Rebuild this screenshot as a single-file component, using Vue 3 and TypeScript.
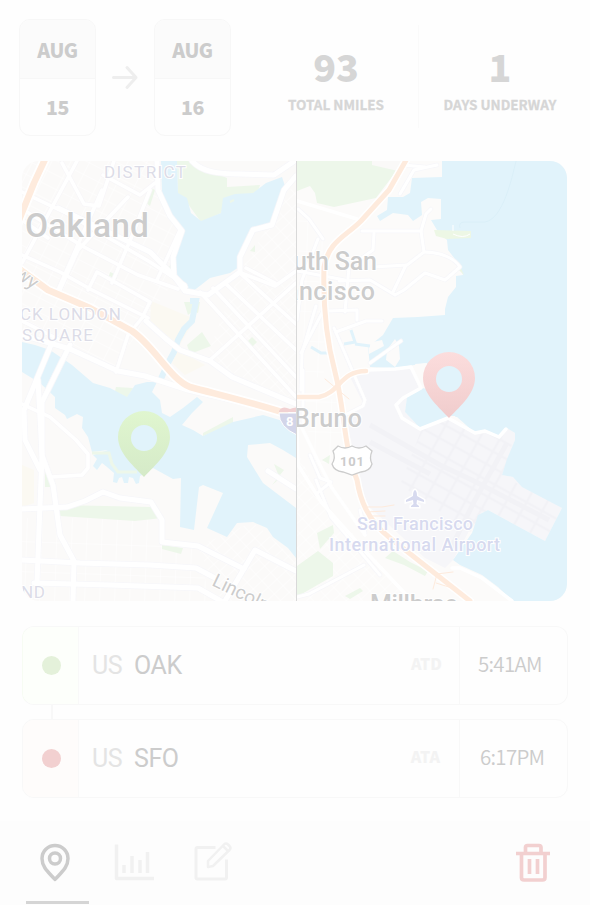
<script setup lang="ts">
interface TripDate { month: string; day: number }
interface Stat { value: number; label: string }
interface Stop { country: string; code: string; tag: string; time: string; kind: 'depart' | 'arrive' }

const dates: TripDate[] = [{ month: 'AUG', day: 15 }, { month: 'AUG', day: 16 }]
const stats: Stat[] = [{ value: 93, label: 'TOTAL NMILES' }, { value: 1, label: 'DAYS UNDERWAY' }]
const stops: Stop[] = [
  { country: 'US', code: 'OAK', tag: 'ATD', time: '5:41AM', kind: 'depart' },
  { country: 'US', code: 'SFO', tag: 'ATA', time: '6:17PM', kind: 'arrive' },
]

const pin = 'M0 0C-8-9-26-23-26-40a26 26 0 1 1 52 0C26-23 8-9 0 0ZM0-52a13 13 0 1 0 0 26a13 13 0 0 0 0-26Z'

const oaklandRoads: string[] = [
  'M22 192L66 213L150 262L185 285', 'M22 209L84 247L138 275L178 289', 'M22 255L60 272L92 290L148 318',
  'M77 161L22 263', 'M102 190L58 290', 'M128 197L78 250L60 290', 'M180 230L157 280', 'M150 190L132 236L112 283',
  'M62 163L84 204L99 206L114 161', 'M22 220L48 238', 'M103 175L140 195L155 183',
  'M88 290L97 272L150 302L142 318', 'M142 318L128 335L116 372', 'M22 321L60 340',
  'M210 360L296 283', 'M200 292L296 397', 'M213 288L296 377', 'M225 283L296 350', 'M241 274L296 324',
  'M241 273L275 286L296 271', 'M246 268L275 283', 'M22 404L50 417L76 440L88 454L88 468L82 475L52 477',
]
const oaklandMajor: string[] = [
  'M192 161C202 172 218 174 240 174L274 175L296 160', 'M157 161L158 190L170 216L182 231L173 257L174 276L185 291L208 295L240 272L240 257L253 230L272 225L284 190L296 176',
  'M58 208L150 252L185 287', 'M146 321L165 338L180 350L210 361L232 377L296 404',
  'M22 335L70 349L118 371L145 376L188 390L275 410', 'M53 340L24 410L25 440L40 470', 'M70 345L42 402L42 455L53 485L60 535L74 561L73 601',
  'M38 380L42 455L39 530L37 583', 'M22 509L67 507L85 501L103 492L120 498L151 502L162 520L162 542L198 546L244 569',
  'M22 560L80 563L150 565L196 568L215 578', 'M34 583L110 585L198 588L221 601', 'M225 601L255 550L296 571', 'M268 471L296 489',
]
const bayRoads: string[] = [
  'M362 231L421 231L426 214L431 209', 'M421 231L424 252L407 265L373 267', 'M424 252C442 252 455 259 460 267L445 280L425 273L404 290L395 295L370 280L339 281',
  'M406 265L393 292', 'M400 194L414 170L437 165', 'M403 165L425 167', 'M323 239L309 219L298 209', 'M374 233L373 250L349 267L345 312',
  'M328 311L357 310L357 320', 'M336 332L366 321L382 321', 'M334 328L365 400L363 406L345 415', 'M297 271L345 280', 'M318 239L302 280L297 320',
  'M301 390L302 353L316 306', 'M303 370L303 424', 'M301 353L323 311', 'M316 480L331 517L380 575', 'M297 597L309 594L364 565',
  'M310 455L320 478L331 482L316 494', 'M401 341L370 363', 'M360 510L365 533',
]
const bayMajor: string[] = [
  'M297 201L357 219', 'M297 420L298 465L322 503L365 551L412 601', 'M300 424L320 465L332 488L365 535', 'M367 370L395 369L411 367L421 388L403 398L396 405L402 418L420 429L448 418L475 433L485 431L499 437L506 429',
  'M452 568L460 568L482 578L512 601',
]
const freeway = 'M409 155L389 190L361 221C345 237 329 241 324 267C323 300 325 335 335 372C345 410 343 445 357 480C360 499 367 520 390 538L470 601'
</script>

<template>
  <main class="trip">
    <header class="summary">
      <div class="dates">
        <template v-for="(d, i) in dates" :key="d.day">
          <svg v-if="i > 0" class="arrow" viewBox="0 0 28 26" width="28" height="26">
            <path d="M2.500 12.500H25M16 2.500l9 10L16 22.500" />
          </svg>
          <div class="date">
            <span class="month">{{ d.month }}</span>
            <span class="day">{{ d.day }}</span>
          </div>
        </template>
      </div>
      <div class="stats">
        <div v-for="s in stats" :key="s.label" class="stat">
          <strong>{{ s.value }}</strong>
          <span>{{ s.label }}</span>
        </div>
      </div>
    </header>

    <section class="map">
      <svg viewBox="22 161 545 440" width="545" height="440">
        <defs>
          <clipPath id="left"><rect x="22" y="161" width="274" height="440" /></clipPath>
          <clipPath id="right"><rect x="297" y="161" width="270" height="440" /></clipPath>
          <pattern id="gridA" width="17" height="13" patternUnits="userSpaceOnUse" patternTransform="rotate(27)"><path d="M0 0H17M0 0V13" stroke="#fff" /></pattern>
          <pattern id="gridB" width="15" height="30" patternUnits="userSpaceOnUse" patternTransform="rotate(2)"><path d="M0 0H15M0 0V30" stroke="#fff" /></pattern>
          <pattern id="gridC" width="9" height="12" patternUnits="userSpaceOnUse" patternTransform="rotate(47)"><path d="M0 0H9M0 0V12" stroke="#fff" /></pattern>
          <pattern id="runway" width="18" height="14" patternUnits="userSpaceOnUse" patternTransform="rotate(29)"><path d="M0 2H18M2 0V14" stroke="#f2f2f6" stroke-width="2.500" /></pattern>
          <linearGradient id="green" x1="0" y1="0" x2="0" y2="1"><stop offset="0" stop-color="#e0f6cf" /><stop offset="1" stop-color="#d5eac8" /></linearGradient>
          <linearGradient id="red" x1="0" y1="0" x2="0" y2="1"><stop offset="0" stop-color="#fcdddd" /><stop offset="1" stop-color="#f0cccc" /></linearGradient>
        </defs>

        <g clip-path="url(#left)">
          <rect x="22" y="161" width="275" height="440" fill="#fbfaf9" />
          <path d="M22 161H160V190L183 230L175 280L146 321L112 370L22 330Z" fill="url(#gridA)" />
          <path d="M60 518L162 520V542L198 546L210 601H22V518Z" fill="url(#gridB)" />
          <path d="M240 272L296 180V400L205 360ZM198 546L253 522L296 560V601H220Z" fill="url(#gridC)" />
          <path d="M151 301L195 319L176 351L150 326ZM178 350L205 365L185 375L172 363ZM22 465L34 470V503L22 507Z" fill="#fbf9f2" />
          <path d="M177 161H195L207 170L227 178V187L260 185L257 194L229 197L221 213L201 222L188 204L178 195ZM151 188L155 190L150 206L144 201ZM175 258V280L167 270ZM60 505L151 507L162 518L135 521L60 516ZM162 545L183 548L181 554L162 549ZM203 433L233 417V424L203 436ZM116 387L133 388L127 398L114 395ZM187 345L202 332L211 346L190 354ZM45 469L52 487H45ZM247 342L252 337L257 342L252 347ZM184 302H200L198 313L193 311L188 315ZM110 272L117 275V279L109 276ZM250 251L255 245V252ZM272 485L278 480V474L274 464L284 470Z" fill="#edf7ea" />
          <path d="M161 161H177L178 193L187 198L191 213L201 221L221 213L223 198L235 194L253 193L266 183L282 177L285 186L272 225L252 230L239 253V267L230 273L210 278L192 292L180 287L176 277V250L183 230L172 217L162 192Z" fill="#e1f3fb" />
          <path d="M190 301H196L192 321L184 329L178 340L174 352L168 363L160 381" fill="none" stroke="#e1f3fb" stroke-width="6" />
          <path d="M22 342L35 345L50 350L72 365L93 383L110 388L127 397L135 385L147 382H157L152 392L160 400L162 413L170 417L183 408L197 397L203 402L192 413L182 425L193 430L203 436L233 422L263 415L296 425V458L283 450L270 443L248 445L247 457L263 483L296 508V558L288 548L273 537L267 528L253 522L237 523L227 537L207 528L223 493L203 485L199 487L194 530L180 527L181 478L173 479L153 468L144 474L140 476L139 483L136 484L133 478L129 477L128 483L124 483L122 477L119 478L117 483L113 482L114 473L107 467L102 463L97 470L93 466L97 459L93 455L108 450L92 452L88 437L82 428L83 417L77 414L67 419L65 415L55 408V397L40 383L22 372Z" fill="#e1f3fb" />
          <path d="M92 453H109L112 464L118 472L137 472" fill="none" stroke="#edf7ea" stroke-width="3" />
          <path d="M230 202l4-2M217 199l3-1" stroke="#edf7ea" stroke-width="2" />
          <g fill="none" stroke-linejoin="round" stroke-linecap="round">
            <path v-for="r in oaklandRoads" :key="'c' + r" :d="r" stroke="#f8f7f9" stroke-width="5" />
            <path v-for="r in oaklandMajor" :key="'c' + r" :d="r" stroke="#f7f7fa" stroke-width="6.500" />
            <path v-for="r in oaklandRoads" :key="r" :d="r" stroke="#fff" stroke-width="3.500" />
            <path v-for="r in oaklandMajor" :key="r" :d="r" stroke="#fff" stroke-width="5" />
            <path d="M47 155L34 183L15 230M15 266L48 290L90 308L132 331C155 347 170 379 190 387C220 395 250 402 285 413" stroke="#fff" stroke-width="10" />
            <path d="M47 155L34 183L15 230M15 266L48 290L90 308L132 331C155 347 170 379 190 387C220 395 250 402 285 413" stroke="#feebdd" stroke-width="6.500" />
          </g>
          <path d="M279 411Q282 405 290 409Q296 406 302 409V412H279Z" fill="#f1d2d3" />
          <path d="M279 413H304Q304 428 297 435Q279 427 279 413Z" fill="#d3d5e9" stroke="#fff" />
          <text x="286" y="426" class="shield" fill="#fff">8</text>
          <g class="label">
            <text x="104" y="178" class="district" textLength="82">DISTRICT</text>
            <text x="25" y="236.500" class="city" textLength="124">Oakland</text>
            <text x="20" y="319.500" class="district" textLength="101">CK LONDON</text>
            <text x="22" y="340.500" class="district" textLength="71">SQUARE</text>
            <text x="21" y="598" class="district" textLength="24">ND</text>
            <text transform="translate(14 276) rotate(36)" class="street">wy</text>
            <text transform="translate(211 585) rotate(26)" class="street" textLength="61">Lincoln</text>
          </g>
          <path :d="pin" transform="translate(144 477)" fill="url(#green)" fill-rule="evenodd" />
        </g>

        <g clip-path="url(#right)">
          <rect x="297" y="161" width="270" height="440" fill="#fcfbfa" />
          <path d="M297 200L323 239L324 380L300 370ZM302 395L340 400L348 450L315 470Z" fill="url(#gridB)" />
          <path d="M297 450L322 503L365 545L412 601H297Z" fill="url(#gridC)" />
          <path d="M297 161H404L376 198L334 207L317 203L315 193L310 186L297 191ZM297 566L318 551L333 563V576L300 595L297 597ZM317 533L333 525L334 533L320 549ZM385 558L393 551L410 562L428 571L425 576L404 565ZM345 596L360 588L363 591L350 599ZM322 460L330 455L329 464Z" fill="#edf7ea" />
          <path d="M372 161H404L398 171L372 165Z" fill="#faf9f8" />
          <path d="M370 368L411 367L422 388L407 397L405 412L420 428L448 417L475 433L485 431L500 437L507 428L515 433V440L502 475L513 477L562 508L545 541L488 510L478 515L453 560L445 568L425 558L365 503L358 465L345 420L364 405L350 377Z" fill="#f6f6f9" />
          <path d="M422 428L448 417L475 433L515 435L502 475L562 508L545 541L488 510L472 533L400 485Z" fill="url(#runway)" />
          <path d="M370 425L440 465L472 480L549 520M507 443L475 500L450 550M370 442L430 474" fill="none" stroke="#f2f2f6" stroke-width="5" />
          <path d="M442 161V177L412 178L410 193L403 197L388 197L387 210L377 216L380 221L393 213L408 215L413 221L422 215L421 202L428 198L441 199V219L431 220L437 230L447 240L448 250L458 263L463 275L456 276V287L448 297L445 309V315L418 317L393 318L383 335L368 347L370 367L395 368L427 363L422 388L407 397L405 412L420 428L432 423L448 417H457L475 433L485 431L500 437L507 428L515 433V440L507 459L502 475L513 477L522 487L562 508L545 541L488 510L478 515L472 533L453 560L460 565L482 575L498 587L512 601H568V161Z" fill="#e1f3fb" />
          <path d="M395 339L387 350L386 360L395 367L400 359L399 346ZM369 354L384 346L382 340L368 343ZM415 364L427 363L434 390L422 388ZM449 416L455 416L458 422L450 421Z" fill="#fcfbfa" />
          <path d="M351 330L355 342L344 344M355 344L370 346M311 347L321 353L331 353" fill="none" stroke="#e1f3fb" stroke-width="3" />
          <path d="M434 230L471 231L471 238L447 239L436 236ZM458 262L464 275L458 269Z" fill="#edf7e5" />
          <path d="M460 228Q458 222 465 222L485 222C503 219 512 178 516 161" fill="none" stroke="#daeff8" />
          <path d="M453 234Q463 239 470 234M453 225v6" fill="none" stroke="#fff" />
          <g fill="none" stroke-linejoin="round" stroke-linecap="round">
            <path v-for="r in bayRoads" :key="'c' + r" :d="r" stroke="#f7f7fa" stroke-width="4.500" />
            <path v-for="r in bayRoads" :key="r" :d="r" stroke="#fff" stroke-width="3" />
            <path v-for="r in bayMajor" :key="r" :d="r" stroke="#fff" stroke-width="3.500" />
            <path d="M290 397L319 397C340 393 340 371 366 371" stroke="#fff" stroke-width="7" />
            <path :d="freeway" stroke="#fff" stroke-width="8" />
            <path d="M290 397L319 397C340 393 340 371 366 371" stroke="#feebdd" stroke-width="4.500" />
            <path :d="freeway" stroke="#feebdd" stroke-width="5" />
            <path d="M364 507L382 507L394 505M367 512L385 511M372 516L385 516M325 379L349 399M433 589L437 574L453 572M436 583L452 588" stroke="#feebdd" />
          </g>
          <path d="M338 446Q345 450 352 446Q359 450 366 446L372 451Q369 458 372 464Q370 471 361 472L352 475L343 472Q334 471 332 464Q336 458 333 451Z" fill="#fff" stroke="#ccc" stroke-width="1.300" />
          <text x="340" y="465.500" class="route" textLength="24">101</text>
          <path transform="translate(415 499)" d="M0-9Q2-8 2-3L9 1V3L2 1L1.500 5L4 7V8H-4V7L-1.500 5L-2 1L-9 3V1L-2-3Q-2-8 0-9Z" fill="#d7daef" stroke="#fff" stroke-width="3" paint-order="stroke" />
          <g class="label">
            <text x="279" y="270" class="town" textLength="98">outh San</text>
            <text x="262" y="300" class="town" textLength="113">Francisco</text>
            <text x="294" y="427" class="town" textLength="68">Bruno</text>
            <text x="370" y="613" class="town" textLength="88">Millbrae</text>
            <text x="357" y="529.500" class="airport" textLength="116">San Francisco</text>
            <text x="329" y="550.500" class="airport" textLength="171">International Airport</text>
          </g>
          <path :d="pin" transform="translate(449 418)" fill="url(#red)" fill-rule="evenodd" />
        </g>
        <path d="M296.500 161V601" stroke="#d9d9d9" />
      </svg>
    </section>

    <section class="stops">
      <div v-for="s in stops" :key="s.code" class="stop" :class="s.kind">
        <div class="marker"><i /></div>
        <div class="place"><span>{{ s.country }}</span><b>{{ s.code }}</b><em>{{ s.tag }}</em></div>
        <div class="time">{{ s.time }}</div>
      </div>
    </section>

    <nav class="toolbar">
      <button class="active" aria-label="Map">
        <svg viewBox="0 0 40 40" width="40" height="40"><path d="M20 37.500C15 31.500 7 26 7 16.500a13 13 0 0 1 26 0C33 26 25 31.500 20 37.500Z" stroke-width="3.500" /><circle cx="20" cy="16.500" r="5.500" stroke-width="3.500" /></svg>
      </button>
      <button aria-label="Statistics">
        <svg viewBox="0 0 40 40" width="40" height="40"><path d="M2.500 2.500V36.500H40" stroke-width="3.500" /><path d="M10 31V23M18 31V14M26 31V18M33.500 31V10" stroke-width="3.500" /></svg>
      </button>
      <button aria-label="Edit">
        <svg viewBox="0 0 40 40" width="40" height="40"><path d="M22.500 5.500H4.500Q3 5.500 3 7V35.500Q3 37 4.500 37H32Q33.500 37 33.500 35.500V17.500" stroke-width="3" /><path d="M15 25V19L31 2.500Q33 .5 35 2.500L36.500 4Q38.500 6 36.500 8L20 24Z M30 4L35.500 9.500" stroke-width="2.500" /></svg>
      </button>
      <button class="delete" aria-label="Delete">
        <svg viewBox="0 0 40 40" width="40" height="40"><path d="M3 11.500H37M12.500 11V5.500Q12.500 3.500 14.500 3.500H26Q28 3.500 28 5.500V11M8.500 12V35.500Q8.500 38 11 38H29.500Q32 38 32 35.500V12M16.500 17V32M24.500 17V32" stroke-width="3.700" /></svg>
      </button>
    </nav>
  </main>
</template>

<style>
body { margin: 0; background: #fefefe; }
</style>

<style scoped>
* { box-sizing: border-box; }
.trip { width: 590px; height: 905px; overflow: hidden; display: flex; flex-direction: column; background: #fefefe; font-family: "Noto Sans CJK JP", "Open Sans", sans-serif; color: #ccc; }
.summary { height: 161px; flex: none; padding: 19px 0 0 19px; display: flex; align-items: flex-start; }
.dates { display: flex; align-items: center; width: 242px; }
.arrow { margin: 0 15px; fill: none; stroke: #eee; stroke-width: 3; stroke-linecap: round; stroke-linejoin: round; }
.date { width: 77px; height: 117px; border: 1px solid #f7f7f7; border-radius: 11px; overflow: hidden; display: flex; flex-direction: column; font-weight: 900; font-size: 19.500px; letter-spacing: -0.5px; text-align: center; }
.month { height: 59px; padding-top: 2px; line-height: 56px; background: #fbfbfb; border-bottom: 1px solid #f7f7f7; }
.day { line-height: 56px; }
.stats { display: flex; flex: 1; margin-top: 6px; }
.stat { height: 103px; display: flex; flex-direction: column; align-items: center; width: 157px; padding: 16px 7px 0 0; color: #d6d6d6; }
.stat + .stat { width: 165px; padding-right: 2px; border-left: 1px solid #fafafa; }
.stat strong { font-size: 37.500px; line-height: 50px; margin-bottom: 2px; font-weight: 900; }
.stat span { font-size: 13.500px; line-height: 22px; font-weight: 700; white-space: nowrap; -webkit-text-stroke: 0.3px #d6d6d6; }
.map { flex: none; margin-left: 22px; width: 545px; height: 440px; border-radius: 17px; overflow: hidden; }
.map svg { display: block; }
.map text { font-family: Roboto, sans-serif; }
.label { fill: #ccc; stroke: #fff; stroke-width: 2px; paint-order: stroke; }
.map .city { font-size: 33.500px; font-weight: 500; }
.map .town { font-size: 25px; font-weight: 500; }
.map .district { font-size: 17px; fill: #dcdce7; }
.map .street { font-size: 19px; }
.map .airport { font-size: 18px; font-weight: 500; fill: #d7daef; }
.map .route { font-size: 13px; font-weight: 700; fill: #ccc; }
.map .shield { font-size: 13px; font-weight: 700; }
.stops { display: flex; flex-direction: column; gap: 14px; margin: 25px 0 0 22px; }
.stop { position: relative; width: 546px; height: 79px; display: flex; border: 1px solid #f8f8f8; border-radius: 12px; }
.marker { width: 56px; display: flex; align-items: center; justify-content: center; border-right: 1px solid #f9f9f9; border-radius: 11px 0 0 11px; padding: 0 0 1px 2px; }
.marker i { width: 19px; height: 19px; border-radius: 50%; }
.depart { border-left-color: #f7fcf3; }
.depart .marker { background: #fdfffb; }
.depart .marker i { background: #e4f1da; }
.arrive .marker { background: #fefcfb; }
.arrive .marker i { background: #f2d0d0; }
.depart::after { content: ""; position: absolute; left: 28px; top: 78px; width: 2px; height: 14px; background: #f8f8f8; }
.place { flex: 1; display: flex; align-items: center; padding: 0 17px 0 13px; font-family: Roboto, sans-serif; font-size: 25px; letter-spacing: -0.4px; }
.place span { width: 42px; color: #e4e4e4; }
.place b { font-weight: 400; }
.place em { margin: -6px 0 0 auto; font: 900 16px "Noto Sans CJK JP", sans-serif; letter-spacing: 0; color: #f3f3f3; }
.arrive .place em { margin-right: 2px; }
.time { width: 108px; border-left: 1px solid #f8f8f8; padding-left: 18px; font-size: 20.500px; line-height: 73px; letter-spacing: -0.7px; font-weight: 350; color: #ccc; white-space: nowrap; }
.arrive .time { padding-left: 20px; }
.toolbar { margin-top: auto; height: 84px; display: flex; padding: 0 25px 1px 26px; background: #fdfdfd; }
.toolbar button { width: 63px; height: 83px; margin-right: 16px; padding: 21px 5px 0 0; border: 0; border-bottom: 3px solid transparent; background: none; color: #f1f1f1; display: flex; align-items: flex-start; justify-content: center; }
.toolbar svg { fill: none; stroke: currentColor; stroke-linejoin: round; flex: none; }
.toolbar .active { color: #ccc; border-bottom-color: #d5d5d5; }
.toolbar .delete { margin: 0 0 0 auto; padding-right: 1px; color: #f2d0d0; }
</style>
